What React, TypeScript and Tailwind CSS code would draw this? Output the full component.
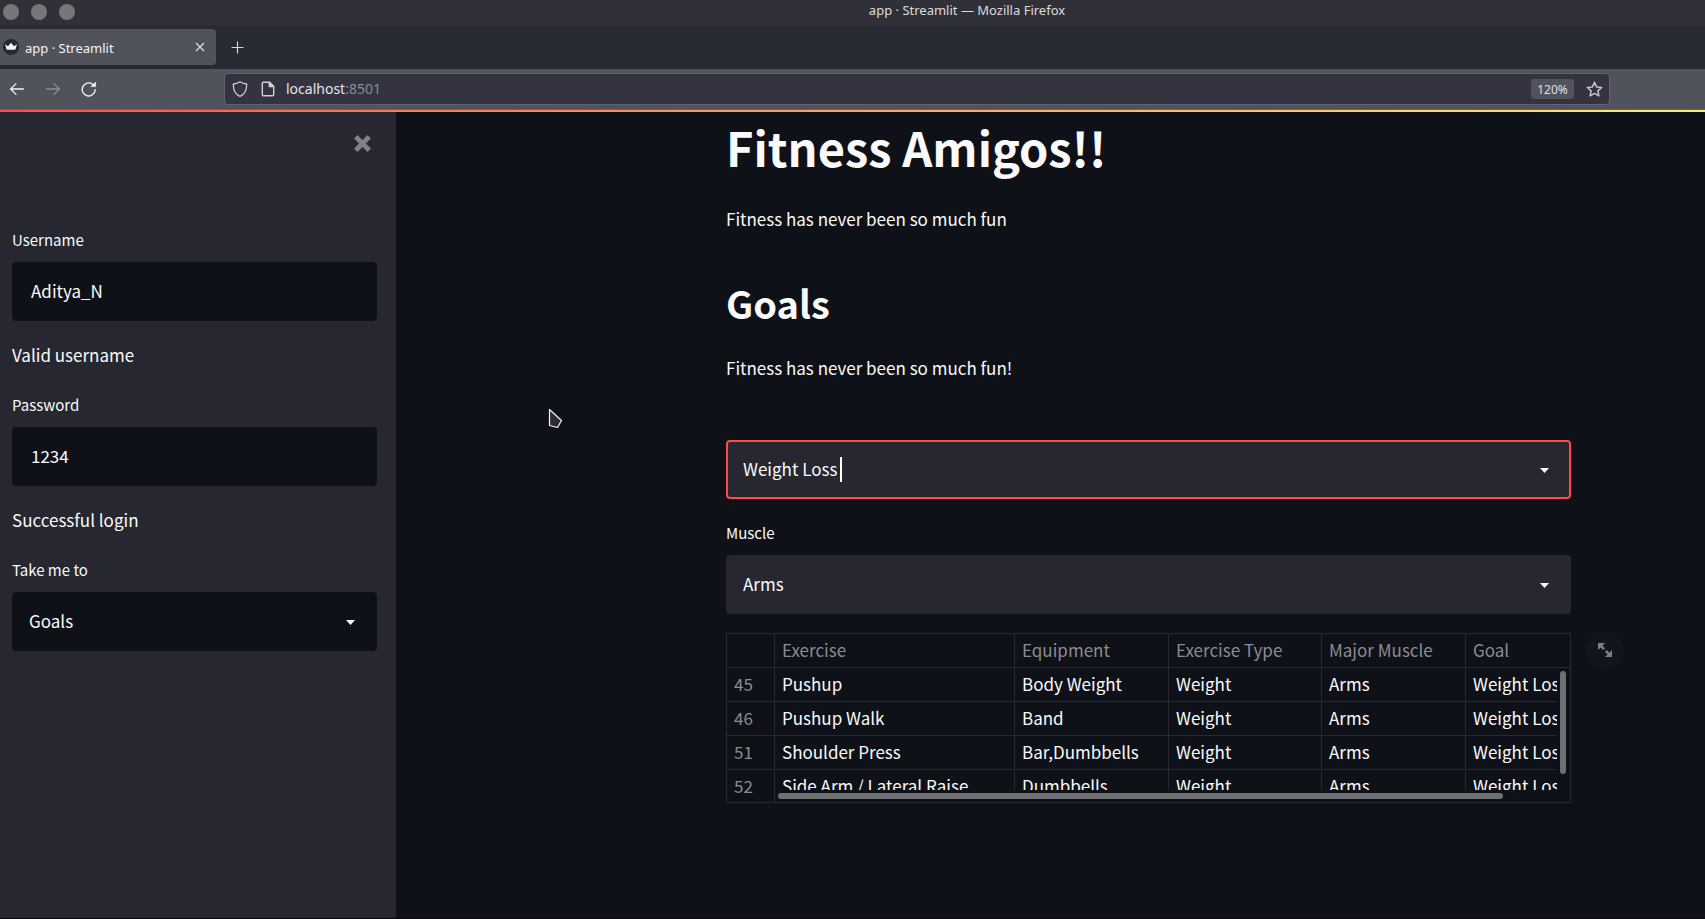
import React, { useState } from 'react';

const rows = [
  { id: 45, cells: ['Pushup', 'Body Weight', 'Weight', 'Arms', 'Weight Loss'] },
  { id: 46, cells: ['Pushup Walk', 'Band', 'Weight', 'Arms', 'Weight Loss'] },
  { id: 51, cells: ['Shoulder Press', 'Bar,Dumbbells', 'Weight', 'Arms', 'Weight Loss'] },
  { id: 52, cells: ['Side Arm / Lateral Raise', 'Dumbbells', 'Weight', 'Arms', 'Weight Loss'] },
];

const columns = [
  { name: 'Exercise', width: 'w-[240px]' },
  { name: 'Equipment', width: 'w-[154px]' },
  { name: 'Exercise Type', width: 'w-[153px]' },
  { name: 'Major Muscle', width: 'w-[144px]' },
  { name: 'Goal', width: '' },
];

function TitleBar() {
  return (
    <div className="flex h-[25px] items-center bg-[#303038] pb-px pl-[3px]">
      <div className="flex gap-3">
        <button aria-label="Close window" className="size-4 rounded-full bg-[#77767b]" />
        <button aria-label="Minimize window" className="size-4 rounded-full bg-[#77767b]" />
        <button aria-label="Maximize window" className="size-4 rounded-full bg-[#77767b]" />
      </div>
      <div className="flex-1 pb-1 pl-[154px] text-center text-[13px] leading-5 text-[#dcdcde]">
        app · Streamlit — Mozilla Firefox
      </div>
    </div>
  );
}

function TabStrip() {
  return (
    <div className="flex h-11 items-center bg-[#282a33]">
      <div className="flex h-9 w-[216px] items-center rounded-r bg-[#50535b] pr-[11px] pl-[3px]">
        <svg className="size-4" viewBox="0 0 16 16" aria-hidden="true">
          <circle cx="8" cy="8" r="8" fill="#262730" />
          <path d="M2 5.2 5 7.2 8 3.8l3 3.4 3-2-1.7 5.6H3.7Z" fill="#f4f4f4" />
        </svg>
        <span className="flex-1 pt-[2px] pl-[6px] text-[13px] leading-5 text-[#f4f4f6]">app · Streamlit</span>
        <button aria-label="Close tab">
          <svg className="size-[10px]" viewBox="0 0 10 10" fill="none" stroke="#e4e4e8" strokeWidth="1.1">
            <path d="m1 1 8 8M9 1 1 9" />
          </svg>
        </button>
      </div>
      <button aria-label="New tab" className="ml-[15px]">
        <svg className="size-[13px]" viewBox="0 0 13 13" fill="none" stroke="#d6d6da" strokeWidth="1.2">
          <path d="M6.5 0.5v12M0.5 6.5h12" />
        </svg>
      </button>
    </div>
  );
}

function Toolbar() {
  return (
    <div className="flex h-10 items-center bg-[#50535b] pr-[95px] pl-[9px]">
      <div className="flex w-[215px] items-center gap-5">
        <button aria-label="Back">
          <svg className="size-4" viewBox="0 0 16 16" fill="none" stroke="#f2f2f4" strokeWidth="1.3" strokeLinecap="round" strokeLinejoin="round">
            <path d="M14.5 8H1.8M7 2.6 1.6 8 7 13.4" />
          </svg>
        </button>
        <button aria-label="Forward" disabled>
          <svg className="size-4" viewBox="0 0 16 16" fill="none" stroke="#8c8e94" strokeWidth="1.3" strokeLinecap="round" strokeLinejoin="round">
            <path d="M1.5 8h12.7M9 2.6 14.4 8 9 13.4" />
          </svg>
        </button>
        <button aria-label="Reload">
          <svg className="size-4" viewBox="0 0 16 16" fill="none">
            <path d="M14.2 8.6A6.500 6.500 0 1 1 11.600 3.200L13 4.500" stroke="#f2f2f4" strokeWidth="1.4" strokeLinecap="round" />
            <path d="M14.600 1v4.600H10Z" fill="#f2f2f4" stroke="#f2f2f4" strokeWidth="0.6" strokeLinejoin="round" />
          </svg>
        </button>
      </div>
      <div className="flex h-8 flex-1 items-center rounded border border-[#5f6177] bg-[#333440] pr-[6px] pl-[7px]">
        <svg className="size-4" viewBox="0 0 16 16" fill="none" stroke="#cfcfd8" strokeWidth="1.3" strokeLinejoin="round">
          <path d="M8 0.8c2 1.5 4.300 2 6.600 2.200.3 5.500-1.300 10-6.600 12.300C2.700 13 1.100 8.500 1.400 3 3.700 2.800 6 2.300 8 .8Z" />
        </svg>
        <svg className="ml-3 size-4" viewBox="0 0 16 16" fill="none" stroke="#cfcfd8" strokeWidth="1.4" strokeLinejoin="round">
          <path d="M3.300 1.200h6.200l4.200 4.200v8.400a1 1 0 0 1-1 1H3.300a1 1 0 0 1-1-1V2.200a1 1 0 0 1 1-1Z" />
          <path d="M9.300 1.200v4.400h4.400Z" fill="#cfcfd8" />
        </svg>
        <div className="flex-1 pl-[10px] text-sm leading-5 text-[#e4e4ea]">
          localhost<span className="text-[#8b8c98]">:8501</span>
        </div>
        <button className="h-5 w-[43px] rounded-[3px] bg-[#50535b] text-center text-[12px] leading-[22px] text-[#e0e0e6]">120%</button>
        <button aria-label="Bookmark this page" className="ml-3">
          <svg className="size-[17px]" viewBox="0 0 17 17" fill="none" stroke="#c4c4cc" strokeWidth="1.5" strokeLinejoin="round">
            <path d="m8.500 1.300 2.100 4.600 5.100.6-3.800 3.400 1 5-4.400-2.500-4.400 2.500 1-5L1.300 6.500l5.100-.6Z" />
          </svg>
        </button>
      </div>
    </div>
  );
}

function TextField({ id, label, initial }: { id: string; label: string; initial: string }) {
  const [value, setValue] = useState(initial);
  return (
    <div>
      <label htmlFor={id} className="block text-[15px] leading-6">{label}</label>
      <input
        id={id}
        value={value}
        onChange={(e) => setValue(e.target.value)}
        className="mt-[10px] block h-[59px] w-full rounded bg-[#0e1117] px-[19px] pb-[2px] text-[17px] outline-none"
      />
    </div>
  );
}

function SelectBox({ id, label, options, className, showLabel = true, caret = false }: {
  id: string;
  label: string;
  options: string[];
  className: string;
  showLabel?: boolean;
  caret?: boolean;
}) {
  return (
    <div>
      {showLabel && <label htmlFor={id} className="mb-[10px] block text-[15px] leading-6">{label}</label>}
      <div className="relative">
        <select
          id={id}
          aria-label={showLabel ? undefined : label}
          className={`block h-[59px] w-full appearance-none rounded border-2 px-[15px] pb-[2px] text-[17px] outline-none ${className}`}
        >
          {options.map((o) => <option key={o}>{o}</option>)}
        </select>
        {caret && <span className="pointer-events-none absolute top-[17px] left-[114px] h-[25px] w-[2px] bg-white" />}
        <svg className="pointer-events-none absolute top-7 right-[22px] h-[5px] w-[9px]" viewBox="0 0 9 5" aria-hidden="true">
          <path d="M0 0h9L4.500 5Z" fill="#fafafa" />
        </svg>
      </div>
    </div>
  );
}

function Sidebar() {
  return (
    <aside className="w-[396px] shrink-0 bg-[#262730] pr-[19px] pl-3">
      <div className="flex justify-end pt-[23px] pr-[6px]">
        <button aria-label="Close sidebar">
          <svg className="size-[17px]" viewBox="0 0 17 17" fill="none" stroke="#808186" strokeWidth="4.800">
            <path d="m1.800 1.800 13.400 13.400M15.200 1.800 1.800 15.200" />
          </svg>
        </button>
      </div>
      <div className="pt-[76px]">
        <TextField id="username" label="Username" initial="Aditya_N" />
        <p className="mt-[19px] mb-[23px] text-[17px] leading-[30px]">Valid username</p>
        <TextField id="password" label="Password" initial="1234" />
        <p className="mt-[19px] mb-[23px] text-[17px] leading-[30px]">Successful login</p>
        <SelectBox id="page" label="Take me to" options={['Goals']} className="border-[#0e1117] bg-[#0e1117]" />
      </div>
    </aside>
  );
}

function ExerciseTable() {
  return (
    <div className="relative mt-[19px]">
      <div className="relative h-[170px] overflow-hidden border border-[#282a2f]">
        <table className="w-full table-fixed border-separate border-spacing-0 text-left text-[17px] leading-[31px] whitespace-nowrap">
          <thead>
            <tr className="text-[#8b8c90]">
              <th className="w-[47px] border-b border-[#282a2f] p-0" aria-label="Index" />
              {columns.map((c) => (
                <th key={c.name} className={`border-b border-l border-[#282a2f] pt-0 pr-0 pb-[2px] pl-[7px] font-normal ${c.width}`}>{c.name}</th>
              ))}
            </tr>
          </thead>
          <tbody>
            {rows.map((r) => (
              <tr key={r.id}>
                <th className="border-b border-[#282a2f] pt-0 pr-0 pb-[2px] pl-[7px] font-normal text-[#8b8c90]">{r.id}</th>
                {r.cells.map((cell, i) => (
                  <td key={i} className="overflow-hidden border-b border-l border-[#282a2f] pt-0 pr-0 pb-[2px] pl-[7px]">{cell}</td>
                ))}
              </tr>
            ))}
          </tbody>
        </table>
        <div className="absolute top-[34px] right-0 bottom-0 w-[13px] bg-[#0e1117] pt-[3px] pl-[3px]">
          <div className="h-[103px] w-[6px] rounded-full bg-[#6f7074]" />
        </div>
        <div className="absolute right-0 bottom-0 left-12 h-3 bg-[#0e1117] pt-[3px] pr-[67px] pl-[3px]">
          <div className="h-[6px] rounded-full bg-[#6f7074]" />
        </div>
      </div>
      <button
        aria-label="View fullscreen"
        className="absolute -top-[2px] left-full ml-[15px] flex size-[38px] items-center justify-center rounded-full bg-[#12151c]"
      >
        <svg className="size-[14px]" viewBox="0 0 8 8" fill="#7f8084">
          <path d="M0 0v4l1.500-1.500L3 4l1-1-1.500-1.500L4 0H0zm5 4L4 5l1.500 1.500L4 8h4V4L6.500 5.500 5 4z" />
        </svg>
      </button>
    </div>
  );
}

export default function App() {
  return (
    <div className="relative flex min-h-screen flex-col bg-[#0e1117] font-['Noto_Sans',sans-serif]">
      <header>
        <TitleBar />
        <TabStrip />
        <Toolbar />
        <div className="h-px bg-[#5f6177]" />
        <div className="h-[2px] bg-linear-to-r from-[#ff4b4b] to-[#ffe872]" />
      </header>
      <div className="flex flex-1 border-b border-[#07080b] font-['Noto_Sans_CJK_SC',sans-serif] text-[#fafafa]">
        <Sidebar />
        <main className="min-w-0 flex-1 pt-[7px] pr-[134px] pl-[330px]">
          <h1 className="text-[47px] leading-[56px] font-bold">Fitness Amigos!!</h1>
          <p className="mt-[29px] text-[17px] leading-[30px]">Fitness has never been so much fun</p>
          <h2 className="mt-[43px] mb-6 text-[38px] leading-[52px] font-semibold">Goals</h2>
          <p className="mb-[57px] text-[17px] leading-[30px]">Fitness has never been so much fun!</p>
          <SelectBox id="goal" label="Goal" options={['Weight Loss']} className="border-[#ff4b4b] bg-[#262730]" showLabel={false} caret />
          <div className="mt-[22px]">
            <SelectBox id="muscle" label="Muscle" options={['Arms']} className="border-[#262730] bg-[#262730]" />
          </div>
          <ExerciseTable />
        </main>
      </div>
      <svg className="pointer-events-none absolute top-[408px] left-[548px] h-[21px] w-[15px]" viewBox="0 0 15 21" aria-hidden="true">
        <path d="M1.500 1.500 13.500 12.500 9.500 19.500 1.500 17.500Z" fill="#2b2c36" stroke="#f4f4f4" strokeWidth="1.200" strokeLinejoin="round" />
      </svg>
    </div>
  );
}
